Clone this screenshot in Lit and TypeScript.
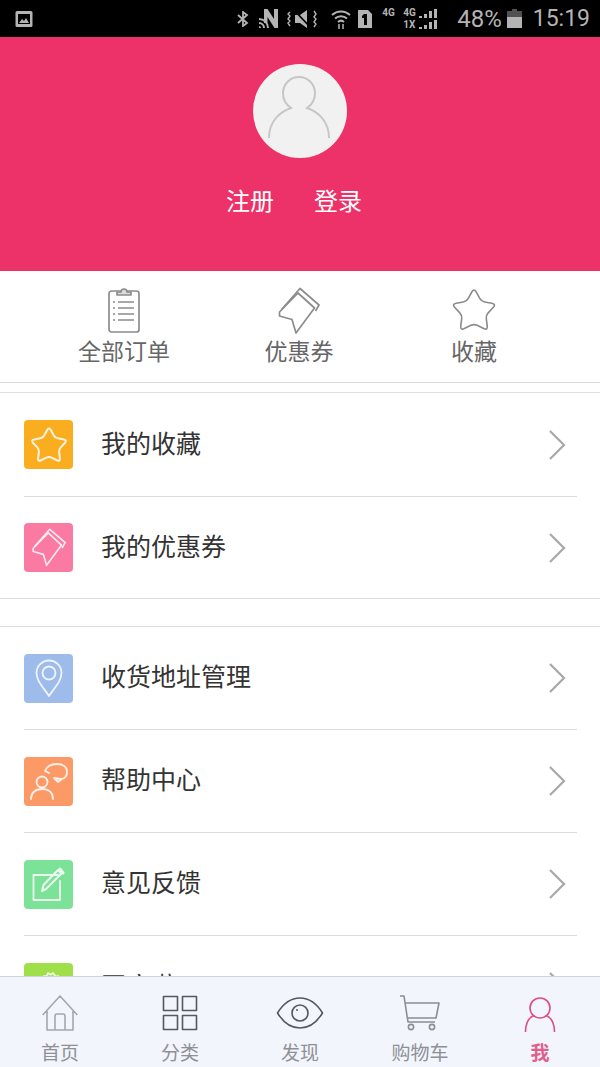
import { LitElement, html, css, svg } from "lit";
import { customElement } from "lit/decorators.js";

// star with soft corners, used in the quick row and the first menu tile
const starPath = (() => {
  const pts: number[][] = [];
  for (let i = 0; i < 10; i++) {
    const r = i % 2 ? 13 : 24.5;
    const a = (Math.PI / 5) * i - Math.PI / 2;
    pts.push([24 + r * Math.cos(a), 25.5 + r * Math.sin(a)]);
  }
  const lerp = (p: number[], q: number[], t: number) =>
    `${(p[0] + (q[0] - p[0]) * t).toFixed(1)} ${(p[1] + (q[1] - p[1]) * t).toFixed(1)}`;
  let d = "";
  pts.forEach((p, i) => {
    const prev = pts[(i + 9) % 10];
    const next = pts[(i + 1) % 10];
    const t = i % 2 ? 0.22 : 0.3;
    d += `${i ? "L" : "M"}${lerp(p, prev, t)} Q${p[0].toFixed(1)} ${p[1].toFixed(1)} ${lerp(p, next, t)} `;
  });
  return d + "Z";
})();

const starIcon = svg`<path d=${starPath}/>`;
const ticketIcon = svg`
  <path d="M1.500 25 20 6 36.500 21 18 46 14 32.500 1.500 29Z"/>
  <path d="M3.500 22.500 22 1.500 41 18 37.500 24"/>`;

const menuIcons: Record<string, unknown> = {
  star: html`<svg class="glyph" viewBox="0 0 48 48" width="38" height="38" style="stroke-width:2.600">${starIcon}</svg>`,
  ticket: html`<svg class="glyph" viewBox="0 0 42 48" width="34" height="39" style="stroke-width:2">${ticketIcon}</svg>`,
  pin: html`<svg class="glyph" viewBox="0 0 28 38" width="28" height="38">
    <path d="M14 37C8 28 1.500 22 1.500 14a12.500 12.500 0 0 1 25 0C26.500 22 20 28 14 37Z"/>
    <circle cx="14" cy="14" r="6.500"/></svg>`,
  help: html`<svg class="glyph" viewBox="0 0 38 38" width="38" height="38">
    <circle cx="12" cy="20" r="5.500"/>
    <path d="M1 37c0-6 4-10 11-10s11 4 11 10"/>
    <path d="M15 9c2-5 7-7 12-7 6 0 10 3 10 8 0 3-2 6-5 7l-4 3-4-4 7 1M15 9l4 2"/></svg>`,
  edit: html`<svg class="glyph" viewBox="0 0 34 34" width="34" height="34">
    <path d="M26 8H1.500V33H28V14"/>
    <path d="M10 24l1.500-6L26 3l3 4-15 15-4 2Z" stroke-width="2"/>
    <path d="M28 2l3 4" stroke-width="3"/></svg>`,
  gear: html`<svg class="glyph" viewBox="0 0 34 34" width="34" height="34">
    <path d="M6 10c3-1 5-2 6-4 2 1 3 0 4-3 2 2 3 2 5 0 2 3 3 4 5 3 1 2 3 3 6 4"/></svg>`,
};

const quickItems = [
  {
    label: "全部订单",
    icon: html`<svg viewBox="0 0 32 46" width="32" height="46">
      <rect x="1" y="4" width="30" height="41" rx="2.500"/>
      <path d="M9 8V5h4c0-4 6-4 6 0h4v3Z" fill="#ddd"/>
      <path d="M10 15h16M10 21h16M10 27h16M10 33h16M5 15h2M5 21h2M5 27h2M5 33h2"/>
    </svg>`,
  },
  { label: "优惠券", icon: html`<svg viewBox="0 0 42 48" width="42" height="48">${ticketIcon}</svg>` },
  { label: "收藏", icon: html`<svg viewBox="0 0 48 48" width="46" height="46">${starIcon}</svg>` },
];

const menuGroups = [
  [
    { label: "我的收藏", icon: "star", color: "#fbad20", cls: "tall" },
    { label: "我的优惠券", icon: "ticket", color: "#fb7aa3", cls: "short" },
  ],
  [
    { label: "收货地址管理", icon: "pin", color: "#9dbcec", cls: "" },
    { label: "帮助中心", icon: "help", color: "#fb9a67", cls: "" },
    { label: "意见反馈", icon: "edit", color: "#7ce298", cls: "" },
    { label: "开店啦", icon: "gear", color: "#9fe04a", cls: "" },
  ],
];

const tabs = [
  {
    label: "首页",
    icon: html`<svg viewBox="0 0 36 36" width="36" height="36" stroke="#a4a7ad">
      <path d="M.7 20 18 1 35.300 20M5 16v19h26V16M13 35V21a2 2 0 0 1 2-2h6a2 2 0 0 1 2 2v14"/></svg>`,
  },
  {
    label: "分类",
    icon: html`<svg viewBox="0 0 36 36" width="36" height="36" stroke="#55585e" stroke-width="2.200">
      <rect x="1.500" y="1.500" width="14" height="14"/><rect x="20.500" y="1.500" width="14" height="14"/>
      <rect x="1.500" y="20.500" width="14" height="14"/><rect x="20.500" y="20.500" width="14" height="14"/></svg>`,
  },
  {
    label: "发现",
    icon: html`<svg viewBox="0 0 48 36" width="48" height="36" stroke="#55585e" stroke-width="2.200">
      <path d="M1.500 18C7 9 15 3 24 3s17 6 22.500 15C41 27 33 33 24 33S7 27 1.500 18Z"/>
      <circle cx="24" cy="18" r="8"/><circle cx="21" cy="15" r="1" fill="#55585e" stroke="none"/></svg>`,
  },
  {
    label: "购物车",
    icon: html`<svg viewBox="0 0 40 36" width="40" height="36" stroke="#8b8e94">
      <path d="M0 1h4l4 26h27M5.500 8H39l-3 15H8"/>
      <circle cx="11" cy="32" r="2.600"/><circle cx="32" cy="32" r="2.600"/></svg>`,
  },
  {
    label: "我",
    active: true,
    icon: html`<svg viewBox="0 0 32 38" width="32" height="38" stroke="#dd4f80" stroke-width="1.900">
      <circle cx="16" cy="13" r="10"/>
      <path d="M1.500 37c0-9 3-14 8-16.500M30.500 37c0-9-3-14-8-16.500"/></svg>`,
  },
];

const signal = svg`<path d="M0 9h3V7H0Zm5 0h3V5H5Zm5 0h3V2h-3Zm5 0h3V0h-3Z"/>`;

@customElement("app-root")
export class AppRoot extends LitElement {
  static styles = css`
    :host {
      display: flex;
      flex-direction: column;
      height: 1067px;
      overflow: hidden;
      background: #fff;
      font-family: "Noto Sans CJK SC", "Noto Sans", sans-serif;
    }

    /* status bar */
    .status {
      flex: none;
      height: 37px;
      background: #000;
      color: #b4b4b4;
      display: flex;
      align-items: center;
      padding: 0 10px 0 15px;
      font-family: Roboto, sans-serif;
      font-size: 23px;
      box-sizing: border-box;
    }
    .status svg {
      display: block;
      fill: #b4b4b4;
    }
    .status .spacer {
      flex: 1;
    }
    .net {
      display: flex;
      margin-left: 9px;
      font-size: 10px;
      font-weight: 700;
      line-height: 12px;
    }
    .net .single {
      width: 21px;
      align-self: flex-start;
    }
    .net .pair {
      width: 15px;
      display: flex;
      flex-direction: column;
    }
    .net .bars {
      display: flex;
      flex-direction: column;
      gap: 2px;
      margin: 2px 0 0 1px;
      width: 18px;
    }
    .status .pct {
      margin-left: 20px;
      font-size: 24px;
    }
    .status .battery {
      margin: 0 11px 0 5px;
    }

    /* pink header */
    .header {
      flex: none;
      height: 234px;
      background: #ec3268;
      display: flex;
      flex-direction: column;
      align-items: center;
      padding-top: 27px;
      box-sizing: border-box;
    }
    .avatar {
      width: 94px;
      height: 94px;
      border-radius: 50%;
      background: #f1f1f1;
    }
    .avatar svg {
      display: block;
      fill: none;
      stroke: #c6c6c6;
      stroke-width: 2;
    }
    .auth {
      display: flex;
      gap: 40px;
      margin-top: 24px;
      padding-right: 12px;
      color: #fff;
      font-size: 24px;
      line-height: 36px;
    }

    /* quick links */
    .quick {
      flex: none;
      height: 112px;
      display: grid;
      grid-template-columns: repeat(3, 175px);
      justify-content: center;
      padding-right: 2px;
      border-bottom: 1px solid #d9d9d9;
      box-sizing: border-box;
    }
    .quick-item {
      display: flex;
      flex-direction: column;
      align-items: center;
      padding-top: 16px;
      color: #666;
      font-size: 23px;
      line-height: 32px;
    }
    .quick-item .box {
      height: 47px;
      display: flex;
      align-items: flex-start;
    }
    .quick-item svg {
      fill: none;
      stroke: #8c8c8c;
      stroke-width: 1.700;
      stroke-linejoin: round;
    }

    /* menu list */
    .list {
      flex: 1;
      min-height: 0;
      overflow: hidden;
      padding-top: 9px;
    }
    .group {
      border-top: 1px solid #e0e0e0;
      border-bottom: 1px solid #dcdcdc;
      margin-bottom: 27px;
    }
    .row {
      height: 103px;
      margin: 0 23px 0 24px;
      display: flex;
      align-items: center;
      border-bottom: 1px solid #dcdcdc;
      box-sizing: border-box;
      color: #333;
      font-size: 25px;
    }
    .row.tall {
      height: 104px;
    }
    .row.short {
      height: 101px;
      border-bottom: none;
    }
    .tile {
      width: 49px;
      height: 49px;
      border-radius: 4px;
      display: flex;
      align-items: center;
      justify-content: center;
      flex: none;
    }
    .glyph {
      fill: none;
      stroke: #fff;
      stroke-width: 1.800;
      stroke-linejoin: round;
      stroke-linecap: round;
      opacity: 0.85;
    }
    .row .label {
      flex: 1;
      margin: 0 0 6px 28px;
      line-height: 36px;
    }
    .chevron {
      margin-right: 11px;
      fill: none;
      stroke: #a8a8a8;
      stroke-width: 2.200;
    }

    /* bottom tabs */
    .tabs {
      flex: none;
      height: 91px;
      background: #f2f5fc;
      border-top: 1px solid #cfd2d8;
      display: grid;
      grid-template-columns: repeat(5, 120px);
      box-sizing: border-box;
    }
    .tab {
      display: flex;
      flex-direction: column;
      align-items: center;
      padding-top: 18px;
      color: #8e9095;
      font-size: 19px;
      line-height: 26px;
    }
    .tab .box {
      height: 44px;
    }
    .tab svg {
      display: block;
      fill: none;
      stroke-width: 1.600;
      stroke-linejoin: round;
    }
    .tab.active {
      color: #e0608c;
      font-weight: 700;
    }
  `;

  private renderStatus() {
    return html`<div class="status">
      <svg viewBox="0 0 18 18" width="18" height="18">
        <path fill-rule="evenodd" d="M2 1h14a1.500 1.500 0 0 1 1.500 1.500v13A1.500 1.500 0 0 1 16 17H2A1.500 1.500 0 0 1 .5 15.500v-13A1.500 1.500 0 0 1 2 1Zm1 3v10h12V4Z"/>
        <path d="M4 13l3-4 2 2 2-3 3 5Z"/>
      </svg>
      <div class="spacer"></div>
      <svg viewBox="0 0 14 16" width="14" height="16" style="fill:none;stroke:#b4b4b4;stroke-width:1.800">
        <path d="M2 4l9 8-4 3V1l4 3-9 8"/>
      </svg>
      <svg viewBox="0 0 20 19" width="20" height="19" style="margin-left:9px">
        <path d="M5 14V0h3.500L15 10V0h4v19h-3.500L8.500 8v6Z"/>
        <path d="M0 9a10 10 0 0 1 10 10H8a8 8 0 0 0-8-8Zm0 4a6 6 0 0 1 6 6H4a4 4 0 0 0-4-4Zm0 4a2 2 0 0 1 2 2H0Z"/>
      </svg>
      <svg viewBox="0 0 30 20" width="30" height="20" style="margin-left:8px">
        <path d="M8 6h5l7-5v18l-7-5H8Z"/>
        <path d="M7 1l16 17" style="stroke:#000;stroke-width:1.800"/>
        <path d="M3 3 1 5l2 2-2 3 2 2-2 2 2 3M27 2l2 3-2 3 2 2-2 3 2 2-2 3" style="fill:none;stroke:#b4b4b4;stroke-width:1.400"/>
      </svg>
      <svg viewBox="0 0 20 22" width="20" height="22" style="margin-left:14px;fill:none;stroke:#b4b4b4;stroke-width:2">
        <path d="M1 7a13 13 0 0 1 18 0M4 10.500a9 9 0 0 1 12 0M7 14a4.500 4.500 0 0 1 6 0"/>
        <path d="M8 21v-5M12 21v-5" stroke-width="1.500"/>
      </svg>
      <svg viewBox="0 0 16 18" width="16" height="18" style="margin-left:6px">
        <path fill-rule="evenodd" d="M1 0h10l4 4v14H1ZM7 4 5 6v2h2v7h3V4Z"/>
      </svg>
      <div class="net">
        <span class="single">4G</span>
        <div class="pair"><span>4G</span><span>1X</span></div>
        <div class="bars">
          <svg viewBox="0 0 18 9" width="18" height="9">${signal}</svg>
          <svg viewBox="0 0 18 9" width="18" height="9">${signal}</svg>
        </div>
      </div>
      <span class="pct">48%</span>
      <svg class="battery" viewBox="0 0 15 19" width="15" height="19">
        <path d="M5 0h5v2h5v17H0V2h5Z" opacity=".45"/>
        <path d="M0 8h15v11H0Z"/>
      </svg>
      <span>15:19</span>
    </div>`;
  }

  render() {
    return html`
      ${this.renderStatus()}
      <div class="header">
        <div class="avatar">
          <svg viewBox="0 0 94 94" width="94" height="94">
            <path d="M16 74C16 58 26 48 38 44 32 40 30 35 30 29A16 16 0 1 1 62 29C62 35 60 40 54 44 66 48 76 58 76 74"/>
          </svg>
        </div>
        <div class="auth"><span>注册</span><span>登录</span></div>
      </div>
      <div class="quick">
        ${quickItems.map(
          (q) => html`<div class="quick-item"><div class="box">${q.icon}</div><span>${q.label}</span></div>`
        )}
      </div>
      <div class="list">
        ${menuGroups.map(
          (group) => html`<div class="group">
            ${group.map(
              (r) => html`<div class="row ${r.cls}">
                <div class="tile" style="background:${r.color}">${menuIcons[r.icon]}</div>
                <span class="label">${r.label}</span>
                <svg class="chevron" viewBox="0 0 17 30" width="17" height="30"><path d="M1 1l14 14L1 29"/></svg>
              </div>`
            )}
          </div>`
        )}
      </div>
      <div class="tabs">
        ${tabs.map(
          (t) => html`<div class="tab ${t.active ? "active" : ""}">
            <div class="box">${t.icon}</div>
            <span>${t.label}</span>
          </div>`
        )}
      </div>
    `;
  }
}
